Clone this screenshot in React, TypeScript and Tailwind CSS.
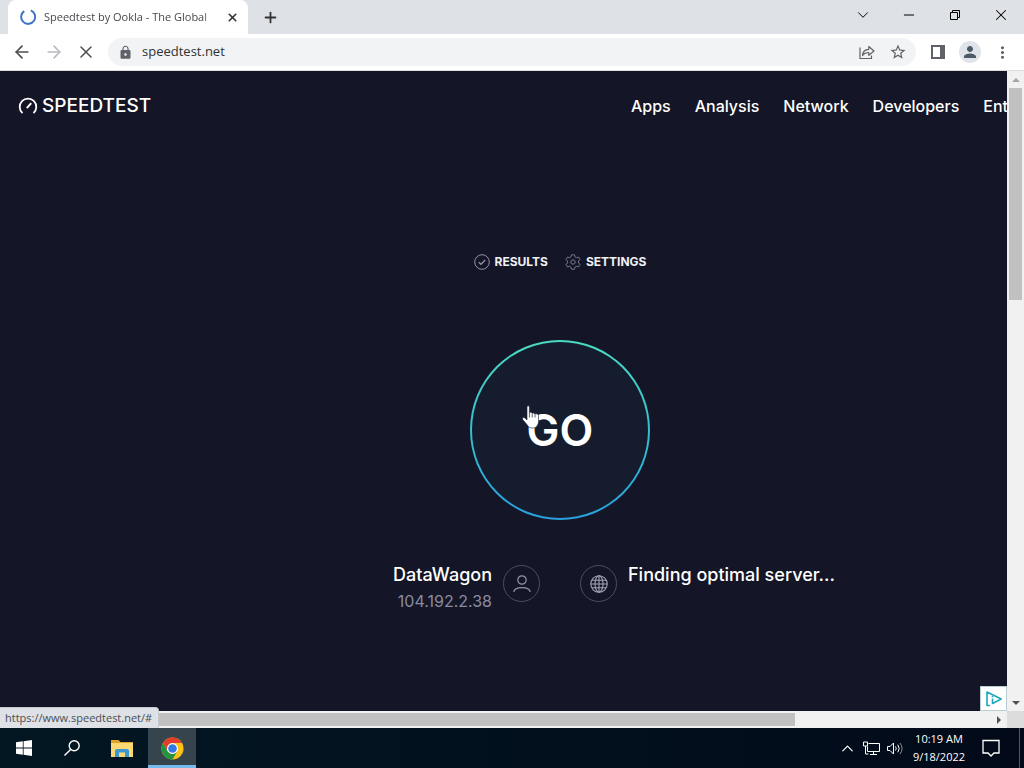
import { useState } from "react";
import { ArrowLeft, ArrowRight, ChevronDown, ChevronUp, Minus, Plus, X } from "lucide-react";
import { MdLock, MdMoreVert, MdPerson, MdStarBorder } from "react-icons/md";

const NAV = ["Apps", "Analysis", "Network", "Developers", "Enterprise"];

function TabStrip() {
  return (
    <div className="flex h-[34px] shrink-0 bg-[#dee1e6] pl-2">
      <div className="flex w-60 items-center rounded-t-lg bg-white pl-3 pr-2">
        <svg viewBox="0 0 16 16" className="size-4 shrink-0" fill="none" stroke="#3b73c5" strokeWidth="2">
          <path d="M10.8 1.4A7 7 0 1 1 4.2 2.1" />
        </svg>
        <span className="ml-2 flex-1 whitespace-nowrap text-[11px] text-[#45484c] [mask-image:linear-gradient(to_right,black_88%,transparent)]">
          Speedtest by Ookla - The Global
        </span>
        <button aria-label="Close tab" className="flex size-4 items-center justify-center text-[#333]">
          <X size={13} strokeWidth={3} />
        </button>
      </div>
      <button aria-label="New tab" className="flex w-11 items-center justify-center text-[#333]">
        <Plus size={17} strokeWidth={2.5} />
      </button>
      <div className="ml-auto flex text-black">
        <button aria-label="Search tabs" className="flex w-[46px] items-center justify-center pb-1">
          <ChevronDown size={18} strokeWidth={1.3} />
        </button>
        <button aria-label="Minimize" className="flex w-[46px] items-center justify-center pb-1">
          <Minus size={16} strokeWidth={1.5} />
        </button>
        <button aria-label="Restore" className="flex w-[46px] items-center justify-center pb-1">
          <svg viewBox="0 0 10 10" className="size-[10px]" fill="none" stroke="currentColor">
            <path d="M.5 2.5h7v7h-7zM2.5 2.5v-2h7v7h-2" />
          </svg>
        </button>
        <button aria-label="Close" className="flex w-[46px] items-center justify-center pb-1">
          <X size={18} strokeWidth={1.4} />
        </button>
      </div>
    </div>
  );
}

function Toolbar() {
  const [url, setUrl] = useState("speedtest.net");

  return (
    <div className="flex h-[37px] shrink-0 items-center border-b border-[#dadce0] bg-white px-[6px] text-[#5f6368]">
      <button aria-label="Back" className="flex w-8 justify-center text-[#4b4d50]">
        <ArrowLeft size={20} />
      </button>
      <button aria-label="Forward" className="flex w-8 justify-center text-[#b9bbbe]">
        <ArrowRight size={20} />
      </button>
      <button aria-label="Stop" className="flex w-8 justify-center text-[#4b4d50]">
        <X size={20} strokeWidth={1.8} />
      </button>
      <div className="ml-[6px] flex h-7 flex-1 items-center rounded-full bg-[#f1f3f4] pl-[10px] pr-2">
        <MdLock size={15} />
        <input
          aria-label="Address"
          value={url}
          onChange={(e) => setUrl(e.target.value)}
          className="ml-[9px] min-w-0 flex-1 bg-transparent text-[13px] text-[#303235] focus:outline-none"
        />
        <button aria-label="Share" className="mr-[9px] flex size-6 items-center justify-center">
          <svg viewBox="0 0 16 16" className="size-4" fill="none" stroke="currentColor" strokeWidth="1.2">
            <path d="M1 3.500V14.500H12.500V11.500" />
            <path d="M3.500 11.500C3.800 7.700 6 5.500 9.800 5.300V2.500L15 7l-5.200 4.300V8.500C7 8.500 5 9.400 3.500 11.500Z" strokeLinejoin="round" />
          </svg>
        </button>
        <button aria-label="Bookmark" className="flex size-5 items-center justify-center">
          <MdStarBorder size={18} />
        </button>
      </div>
      <button aria-label="Side panel" className="ml-[6px] flex w-8 justify-center">
        <svg viewBox="0 0 14 14" className="size-[14px]" fill="none" stroke="currentColor" strokeWidth="2">
          <path d="M1 1h12v12H1z" />
          <path d="M9 1h4v12H9z" fill="currentColor" stroke="none" />
        </svg>
      </button>
      <button aria-label="Profile" className="mx-[5px] flex size-[22px] items-center justify-center rounded-full bg-[#e0e4ea] text-[#4c5a68]">
        <MdPerson size={18} />
      </button>
      <button aria-label="Menu" className="flex w-8 justify-center">
        <MdMoreVert size={19} />
      </button>
    </div>
  );
}

function HandCursor() {
  return (
    <svg viewBox="0 0 18 24" className="pointer-events-none absolute left-[52px] top-[65px] h-6 w-[18px]">
      <path
        d="M5 2c0-1.600 2.400-1.600 2.400 0v5.800c.6-.9 2.500-.6 2.800.6.6-.7 2.400-.5 2.700.8.800-.8 3.600-.5 3.600 1.600v5.700c0 2-.8 3.500-1.700 4.700-.8 1.200-2.200 1.800-4.300 1.800-2.700 0-4.100-.9-5-2.700L.7 14.600c-.9-1.800 1.300-2.700 2.500-1.400L5 15z"
        fill="#fff"
        stroke="#141c2d"
        strokeWidth=".6"
      />
      <path d="M7.400 8v4.500M10.200 8.600v3.900M13 9.400v3.100" stroke="#141c2d" strokeWidth=".7" />
    </svg>
  );
}

function SpeedtestPage() {
  return (
    <div className="flex min-w-[1120px] flex-col items-center">
      <header className="flex h-[70px] w-full items-center pl-[18px] pr-[58px] text-white">
        <a href="#" className="flex items-center gap-1 text-[19px] font-medium">
          <svg viewBox="0 0 20 20" className="size-5" fill="none" stroke="currentColor" strokeWidth="1.8">
            <path d="M4.500 17.200A8.300 8.300 0 1 1 15.500 17.200" />
            <path d="M8.800 12.200L13.200 7.200" strokeWidth="2" />
          </svg>
          SPEEDTEST
        </a>
        <nav className="ml-auto flex gap-6 text-base font-medium">
          {NAV.map((item) => (
            <a key={item} href="#">
              {item}
            </a>
          ))}
        </nav>
      </header>

      <div className="mt-[111px] flex h-5 gap-[17px] text-xs font-bold text-[#f0f1f6]">
        <a href="#" className="flex items-center gap-[5px]">
          <svg viewBox="0 0 16 16" className="size-4" fill="none" stroke="#9193a8">
            <circle cx="8" cy="8" r="7.300" />
            <path d="M4.800 8.200l2.200 2.100 4.200-4.300" strokeWidth="1.300" />
          </svg>
          RESULTS
        </a>
        <a href="#" className="flex items-center gap-[5px]">
          <svg viewBox="0 0 16 16" className="size-4" fill="none" stroke="#77798e" strokeLinejoin="round">
            <path d="M6.500.8h3l.5 2 1.500.9 2-.6 1.500 2.500-1.500 1.500v1.800l1.500 1.500-1.500 2.500-2-.6-1.500.9-.5 2h-3l-.5-2-1.500-.9-2 .6L1 10.400l1.500-1.500V7.100L1 5.600l1.500-2.500 2 .6L6 2.800z" />
            <circle cx="8" cy="8" r="2.200" />
          </svg>
          SETTINGS
        </a>
      </div>

      <button className="relative mt-[68px] size-[180px] rounded-full bg-linear-to-b from-[#4bdbc0] to-[#2a9fdc] p-[2px]">
        <span className="flex size-full items-center justify-center rounded-full bg-[#141c2d] text-[44px] font-semibold text-white">
          GO
        </span>
        <HandCursor />
      </button>

      <div className="mt-[41px] grid w-full grid-cols-2 gap-10 text-lg leading-[27px] text-white">
        <div className="flex justify-end gap-[11px] text-right">
          <div>
            <p className="font-medium">DataWagon</p>
            <p className="text-base leading-[27px] text-[#898ba3]">104.192.2.38</p>
          </div>
          <span className="mt-1 flex size-[37px] items-center justify-center rounded-full border border-[#4c4d60]">
            <svg viewBox="0 0 18 18" className="size-[18px]" fill="none" stroke="#9193a8" strokeWidth="1.200">
              <circle cx="9" cy="5" r="4.200" />
              <path d="M.8 17c.4-3 3-4.300 8.200-4.300s7.800 1.300 8.200 4.300" />
            </svg>
          </span>
        </div>
        <div className="flex gap-[11px]">
          <span className="mt-1 flex size-[37px] items-center justify-center rounded-full border border-[#4c4d60]">
            <svg viewBox="0 0 18 18" className="size-[18px]" fill="none" stroke="#a3a5b8" strokeWidth="1.100">
              <circle cx="9" cy="9" r="8.200" />
              <ellipse cx="9" cy="9" rx="4" ry="8.200" />
              <path d="M9 .8v16.400M.8 9h16.400M2 5.200h14M2 12.800h14" />
            </svg>
          </span>
          <p className="font-medium">Finding optimal server...</p>
        </div>
      </div>
    </div>
  );
}

function VerticalScrollbar() {
  return (
    <div className="flex w-[17px] shrink-0 flex-col items-center bg-[#f1f1f1]">
      <div className="flex h-[17px] shrink-0 items-center">
        <svg viewBox="0 0 8 4" className="h-1 w-2 fill-[#a3a3a3]">
          <path d="M0 4L4 0l4 4z" />
        </svg>
      </div>
      <div className="w-full flex-1 px-[2px]">
        <div className="h-[35%] bg-[#c1c1c1]" />
      </div>
      <div className="flex h-[17px] shrink-0 items-center">
        <svg viewBox="0 0 8 4" className="h-1 w-2 fill-[#505050]">
          <path d="M0 0l4 4 4-4z" />
        </svg>
      </div>
    </div>
  );
}

function HorizontalScrollbar() {
  return (
    <div className="flex h-[17px] shrink-0 bg-[#f1f1f1]">
      <div className="w-[17px]" />
      <div className="flex-1 py-[2px]">
        <div className="h-full w-4/5 bg-[#c1c1c1]" />
      </div>
      <div className="flex w-[17px] items-center justify-center">
        <svg viewBox="0 0 4 8" className="h-2 w-1 fill-[#505050]">
          <path d="M0 0l4 4-4 4z" />
        </svg>
      </div>
      <div className="w-[17px] bg-[#dcdcdc]" />
    </div>
  );
}

function Taskbar() {
  return (
    <footer className="flex h-10 shrink-0 bg-linear-to-r from-[#021722] to-[#020a19] text-white">
      <button aria-label="Start" className="flex w-12 items-center justify-center">
        <svg viewBox="0 0 16 16" className="size-4" fill="currentColor">
          <path d="M0 2.300L6.800 1.300V7.600H0zM7.600 1.200L16 0v7.600H7.600zM0 8.400h6.800v6.300L0 13.700zM7.600 8.400H16V16l-8.400-1.200z" />
        </svg>
      </button>
      <button aria-label="Search" className="flex w-12 items-center justify-center">
        <svg viewBox="0 0 16 16" className="size-4" fill="none" stroke="currentColor" strokeWidth="1.400">
          <circle cx="10.200" cy="5.800" r="5" />
          <path d="M6.600 9.400L.5 15.500" />
        </svg>
      </button>
      <button aria-label="File Explorer" className="flex w-[52px] items-center justify-center">
        <svg viewBox="0 0 22 19" className="h-[19px] w-[22px]">
          <path d="M0 1h7.500l2 2H22v6H0z" fill="#e0a528" />
          <path d="M0 4h22v14H0z" fill="#fbd873" />
          <path d="M4 18v-7l2-1h10l2 1v7z" fill="#3d97cf" />
          <path d="M8 18v-4.500h6V18z" fill="#fbd873" />
        </svg>
      </button>
      <button aria-label="Chrome" className="flex w-12 items-center justify-center border-b-[3px] border-[#76b9ed] bg-[#35444d] pt-[3px]">
        <svg viewBox="0 0 24 24" className="size-[23px]">
          <circle cx="12" cy="12" r="11.500" fill="#fbc116" />
          <path d="M2.040 6.250A11.500 11.500 0 0 1 21.960 6.250H12A5.750 5.750 0 0 0 7.020 14.880z" fill="#e33b2e" />
          <path d="M2.040 6.250A11.500 11.500 0 0 0 12 23.500l4.980-8.620A5.750 5.750 0 0 1 7.020 14.880z" fill="#229342" />
          <circle cx="12" cy="12" r="5.700" fill="#fff" />
          <circle cx="12" cy="12" r="4.500" fill="#3478e5" />
        </svg>
      </button>
      <div className="ml-auto flex items-center">
        <button aria-label="Show hidden icons" className="flex w-6 justify-center">
          <ChevronUp size={19} strokeWidth={1.5} />
        </button>
        <button aria-label="Network" className="flex w-6 justify-center">
          <svg viewBox="0 0 17 15" className="h-[15px] w-[17px]" fill="none" stroke="currentColor">
            <path d="M5.500 2.500h11v8h-12v-5M10.500 10.500v3M7 13.500h7M.5 1h4v4h-4zM2.500 5v8h3" />
          </svg>
        </button>
        <button aria-label="Volume" className="flex w-6 justify-center">
          <svg viewBox="0 0 17 15" className="h-[15px] w-[17px]" fill="none" stroke="currentColor">
            <path d="M.5 5.500h2.500L6.500 2v11L3 9.500H.5zM8.500 5.500q1.500 2 0 4M10.800 3.700q2.800 3.800 0 7.600" />
            <path d="M13 2q4.200 5.500 0 11" stroke="#8a929b" />
          </svg>
        </button>
        <time className="w-16 text-center text-[11px] leading-[18px]">
          10:19 AM
          <br />
          9/18/2022
        </time>
        <button aria-label="Notifications" className="flex w-10 justify-center">
          <svg viewBox="0 0 18 18" className="size-[18px]" fill="none" stroke="currentColor" strokeWidth="1.300">
            <path d="M1 1.500h16v12.500h-5L9 17l-3-3H1z" />
          </svg>
        </button>
        <div className="ml-2 h-10 w-[5px] border-l border-[#4e5562]" />
      </div>
    </footer>
  );
}

export default function App() {
  return (
    <div className="flex h-screen flex-col overflow-hidden font-['Open_Sans','Noto_Sans',sans-serif]">
      <TabStrip />
      <Toolbar />
      <div className="relative flex min-h-0 flex-1 flex-col">
        <div className="flex min-h-0 flex-1">
          <main className="relative min-w-0 flex-1 overflow-hidden bg-[#141526] font-[Inter,sans-serif]">
            <SpeedtestPage />
            {/* AdChoices badge */}
            <a
              href="#"
              aria-label="AdChoices"
              className="absolute bottom-0 right-0 flex h-[25px] w-[27px] items-center justify-center border border-[#b9cdd3] bg-white"
            >
              <svg viewBox="0 0 16 16" className="size-4" fill="none" stroke="#1ba8bb" strokeWidth="1.600" strokeLinejoin="round">
                <path d="M4 14.500H1V1l14.200 7L6.500 12.500V7.500" />
                <path d="M6.500 4.800v1.400" />
              </svg>
            </a>
          </main>
          <VerticalScrollbar />
        </div>
        <HorizontalScrollbar />
        {/* link target shown on hover */}
        <div className="absolute bottom-0 left-0 h-[21px] rounded-tr border-r border-t border-[#c8cacf] bg-[#dee1e6] pl-[5px] pr-[6px] text-[11px] leading-5 text-[#4a4d52]">
          https://www.speedtest.net/#
        </div>
      </div>
      <Taskbar />
    </div>
  );
}
